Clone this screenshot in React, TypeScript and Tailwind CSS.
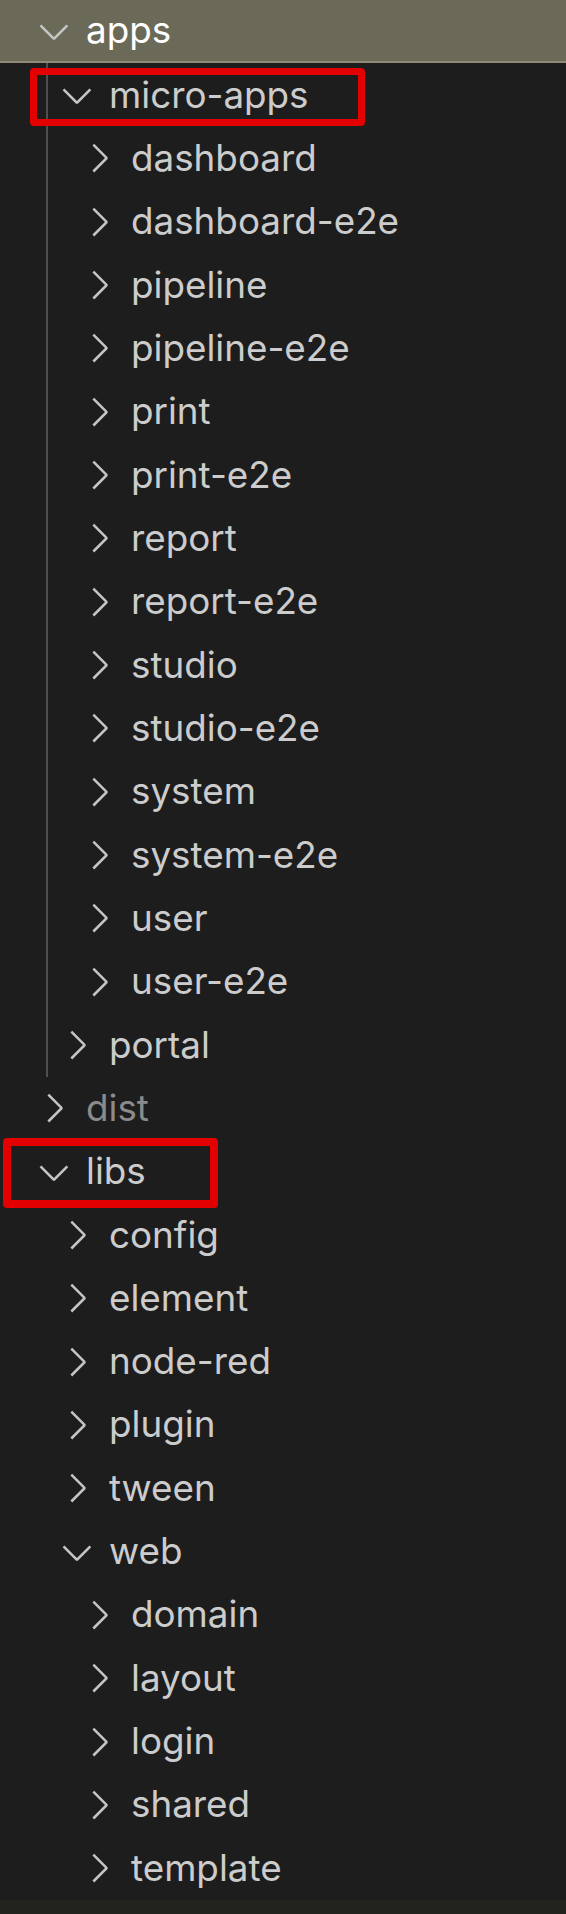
const ROW_PAD = ["pl-[31px]", "pl-[54px]", "pl-[76px]"];

type Item = {
  name: string;
  level: 0 | 1 | 2;
  open?: boolean;
  dim?: boolean;
  selected?: boolean;
  box?: "micro" | "libs";
};

const items: Item[] = [
  { name: "apps", level: 0, open: true, selected: true },
  { name: "micro-apps", level: 1, open: true, box: "micro" },
  { name: "dashboard", level: 2 },
  { name: "dashboard-e2e", level: 2 },
  { name: "pipeline", level: 2 },
  { name: "pipeline-e2e", level: 2 },
  { name: "print", level: 2 },
  { name: "print-e2e", level: 2 },
  { name: "report", level: 2 },
  { name: "report-e2e", level: 2 },
  { name: "studio", level: 2 },
  { name: "studio-e2e", level: 2 },
  { name: "system", level: 2 },
  { name: "system-e2e", level: 2 },
  { name: "user", level: 2 },
  { name: "user-e2e", level: 2 },
  { name: "portal", level: 1 },
  { name: "dist", level: 0, dim: true },
  { name: "libs", level: 0, open: true, box: "libs" },
  { name: "config", level: 1 },
  { name: "element", level: 1 },
  { name: "node-red", level: 1 },
  { name: "plugin", level: 1 },
  { name: "tween", level: 1 },
  { name: "web", level: 1, open: true },
  { name: "domain", level: 2 },
  { name: "layout", level: 2 },
  { name: "login", level: 2 },
  { name: "shared", level: 2 },
  { name: "template", level: 2 },
];

function Chevron({ open }: { open?: boolean }) {
  return (
    <svg viewBox="0 0 16 16" className="h-[46px] w-[46px] shrink-0 fill-[#c5c5c5]">
      {open ? (
        <path d="M7.976 10.072l4.357-4.357.62.618L8.284 11h-.618L3 6.333l.619-.618 4.357 4.357z" />
      ) : (
        <path d="M10.072 8.024L5.715 3.667l.618-.62L11 7.716v.618L6.333 13l-.618-.619 4.357-4.357z" />
      )}
    </svg>
  );
}

function Row({ item }: { item: Item }) {
  return (
    <div
      className={`relative flex h-[63.33px] items-center ${ROW_PAD[item.level]} ${
        item.selected ? "border-b-2 border-[#8d8b78] bg-[#6b6957]" : ""
      }`}
    >
      <Chevron open={item.open} />
      <span
        className={`ml-[9px] whitespace-nowrap text-[36.8px] leading-none ${
          item.selected ? "text-white" : item.dim ? "text-[#8b8b8b]" : "text-[#cccccc]"
        }`}
      >
        {item.name}
      </span>
      {item.box === "micro" && (
        <div className="pointer-events-none absolute left-[30px] top-[5px] h-[58px] w-[335px] rounded-[4px] border-[7.5px] border-[#e30000]" />
      )}
      {item.box === "libs" && (
        <div className="pointer-events-none absolute left-[3px] top-[-2px] h-[70px] w-[215px] rounded-[4px] border-[8px] border-[#e30000]" />
      )}
    </div>
  );
}

export default function App() {
  return (
    <div className="relative h-[1914px] w-[566px] overflow-hidden bg-[#1d1d1d] font-['Inter',sans-serif]">
      <div className="absolute left-[46px] top-[63px] h-[1014px] w-[2px] bg-[#4f4f4f]" />
      <div className="flex flex-col">
        {items.map((item) => (
          <Row key={item.name} item={item} />
        ))}
      </div>
      <div className="h-[14px] bg-[#22231f]" />
    </div>
  );
}
